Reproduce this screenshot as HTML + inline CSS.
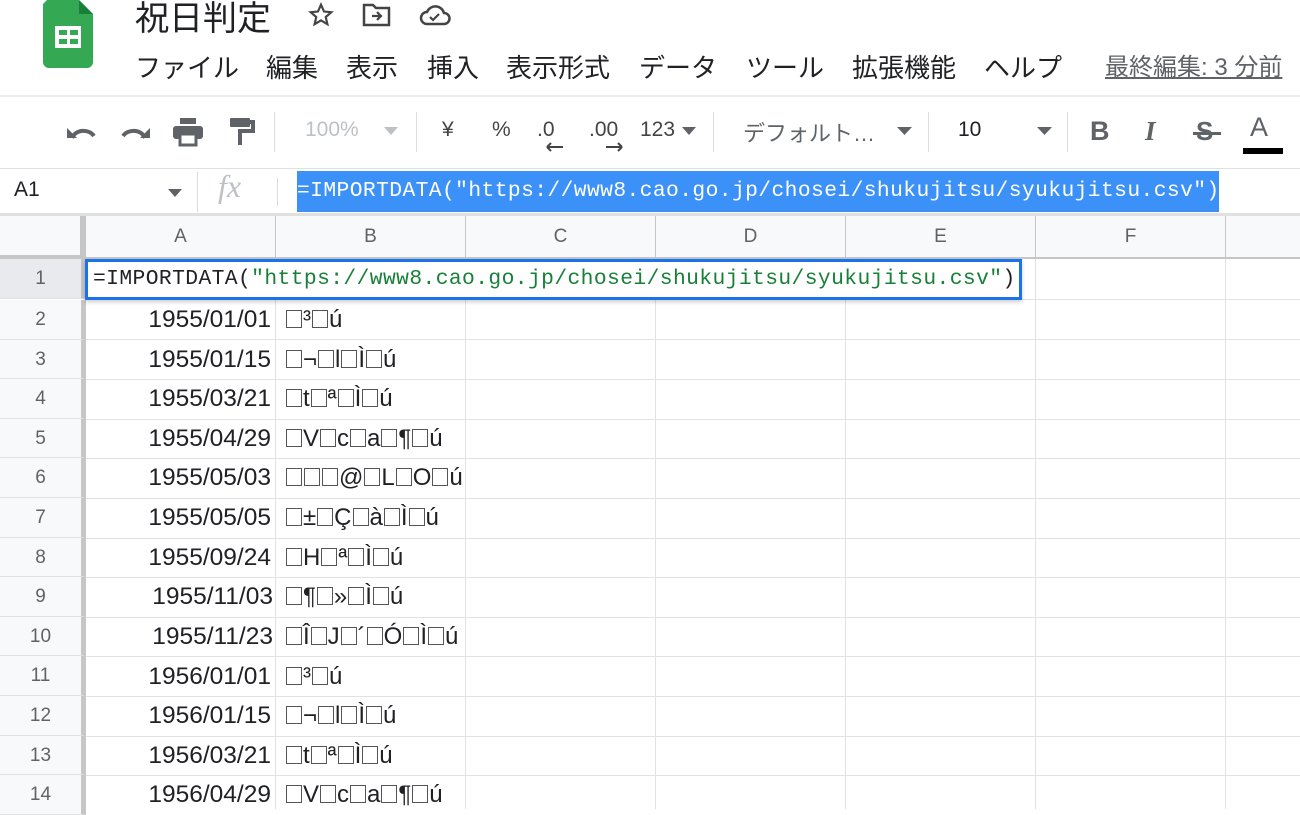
<!DOCTYPE html>
<html><head><meta charset="utf-8">
<style>
*{margin:0;padding:0;box-sizing:border-box}
body{width:1300px;height:809px;overflow:hidden;background:#fff;font-family:"Liberation Sans","Noto Sans CJK JP",sans-serif;position:relative;color:#202124}
.a{position:absolute;white-space:nowrap}
.menu{top:48px;font-size:26px;color:#202124}
.sep{position:absolute;width:1px;background:#dadce0}
.tb{top:118px;font-size:21px;color:#5f6368}
.mono{font-family:"Liberation Mono","DejaVu Sans Mono",monospace}
.col{position:absolute;top:216px;height:43px;border-right:1px solid #c6c6c6;background:#f8f9fa;border-bottom:2px solid #c6c6c6;text-align:center;font-size:19px;color:#5f6368;line-height:42px}
.rh{position:absolute;left:0;width:86px;background:#f8f9fa;border-right:5px solid #c6c6c6;border-bottom:1px solid #e2e2e2;text-align:center;font-size:19px;color:#5f6368;height:39.6px;line-height:40px}
.hl{position:absolute;left:86px;right:0;height:1px;background:#e2e2e2}
.vl{position:absolute;top:259px;bottom:0;width:1px;background:#e2e2e2}
.d{position:absolute;left:60px;width:211px;text-align:right;font-size:24.5px;color:#202124}
.t{position:absolute;left:285px;font-size:24px;color:#202124}
.b{display:inline-block;width:16px;height:18px;border:1px solid #555;vertical-align:-1px;margin:0 1px}
</style></head><body>
<svg class="a" style="left:42px;top:0" width="52" height="70" viewBox="0 0 52 70">
<path d="M5 0H37L51 14V62a6 6 0 0 1-6 6H7a6 6 0 0 1-6-6V4z" fill="#34a853"/>
<path d="M37 0L51 14H37z" fill="#188038"/>
<rect x="13" y="26" width="26" height="22" fill="#fff"/>
<rect x="17" y="30" width="8" height="5" fill="#34a853"/><rect x="28" y="30" width="8" height="5" fill="#34a853"/>
<rect x="17" y="39" width="8" height="5" fill="#34a853"/><rect x="28" y="39" width="8" height="5" fill="#34a853"/>
</svg>
<div class="a" style="left:135px;top:-9px;font-size:34px;color:#202124">祝日判定</div>
<svg class="a" style="left:307px;top:2px" width="28" height="26" viewBox="0 0 24 24"><path d="M12 2.5l2.8 6.3 6.7.6-5.1 4.5 1.5 6.6L12 17l-5.9 3.5 1.5-6.6-5.1-4.5 6.7-.6z" fill="none" stroke="#444" stroke-width="2"/></svg>
<svg class="a" style="left:362px;top:3px" width="30" height="24" viewBox="0 0 30 24"><path d="M2 2h9l3 3h13v17H2z" fill="none" stroke="#444" stroke-width="2.5"/><path d="M10 13h9M15 9l4 4-4 4" fill="none" stroke="#444" stroke-width="2.2"/></svg>
<svg class="a" style="left:418px;top:3px" width="34" height="24" viewBox="0 0 34 24"><path d="M9 21a6 6 0 0 1 0-12 9 9 0 0 1 17 1 5.5 5.5 0 0 1 0 11z" fill="none" stroke="#444" stroke-width="2.5"/><path d="M12 14l3 3 6-6" fill="none" stroke="#444" stroke-width="2.2"/></svg>
<div class="a menu" style="left:135px">ファイル</div>
<div class="a menu" style="left:266px">編集</div>
<div class="a menu" style="left:346px">表示</div>
<div class="a menu" style="left:427px">挿入</div>
<div class="a menu" style="left:506px">表示形式</div>
<div class="a menu" style="left:639px">データ</div>
<div class="a menu" style="left:746px">ツール</div>
<div class="a menu" style="left:852px">拡張機能</div>
<div class="a menu" style="left:984px">ヘルプ</div>
<div class="a" style="left:1105px;top:47px;font-size:24px;color:#5f6368;text-decoration:underline">最終編集: 3 分前</div>
<div class="a" style="left:0;top:95px;width:1300px;height:2px;background:#e8eaed"></div>
<svg class="a" style="left:66px;top:121px" width="32" height="22" viewBox="0 0 32 22"><path d="M6 17a12 10 0 0 1 22 -2" fill="none" stroke="#5f6368" stroke-width="4"/><path d="M1 7v10h10z" fill="#5f6368"/></svg>
<svg class="a" style="left:119px;top:121px" width="32" height="22" viewBox="0 0 32 22"><path d="M26 17a12 10 0 0 0 -22 -2" fill="none" stroke="#5f6368" stroke-width="4"/><path d="M31 7v10h-10z" fill="#5f6368"/></svg>
<svg class="a" style="left:172px;top:117px" width="32" height="30" viewBox="0 0 32 30"><rect x="8" y="1" width="16" height="6" fill="#5f6368"/><rect x="1" y="9" width="30" height="13" rx="3" fill="#5f6368"/><rect x="8" y="17" width="16" height="11" fill="#fff" stroke="#5f6368" stroke-width="3"/></svg>
<svg class="a" style="left:228px;top:117px" width="28" height="30" viewBox="0 0 28 30"><rect x="2" y="1" width="20" height="9" rx="1" fill="#5f6368"/><path d="M22 5h3v9H12v14" fill="none" stroke="#5f6368" stroke-width="4"/></svg>
<div class="sep" style="left:274px;top:112px;height:40px"></div>
<div class="a tb" style="left:305px;color:#bdc1c6">100%</div>
<svg class="a" style="left:384px;top:127px" width="14" height="8"><path d="M0 0h14L7 8z" fill="#bdc1c6"/></svg>
<div class="sep" style="left:416px;top:112px;height:40px"></div>
<div class="a tb" style="left:442px;color:#444">¥</div>
<div class="a tb" style="left:492px;color:#444">%</div>
<div class="a tb" style="left:537px;color:#444">.0</div>
<svg class="a" style="left:545px;top:142px" width="20" height="10"><path d="M2 5h16M2 5l4-4M2 5l4 4" stroke="#444" stroke-width="2" fill="none"/></svg>
<div class="a tb" style="left:589px;color:#444">.00</div>
<svg class="a" style="left:604px;top:142px" width="20" height="10"><path d="M2 5h16M18 5l-4-4M18 5l-4 4" stroke="#444" stroke-width="2" fill="none"/></svg>
<div class="a tb" style="left:640px;color:#444">123</div>
<svg class="a" style="left:682px;top:127px" width="14" height="8"><path d="M0 0h14L7 8z" fill="#5f6368"/></svg>
<div class="sep" style="left:713px;top:112px;height:40px"></div>
<div class="a tb" style="left:743px;font-size:22px;top:116px">デフォルト…</div>
<svg class="a" style="left:897px;top:127px" width="15" height="8"><path d="M0 0h15L7.5 8z" fill="#5f6368"/></svg>
<div class="sep" style="left:928px;top:112px;height:40px"></div>
<div class="a tb" style="left:958px;color:#202124">10</div>
<svg class="a" style="left:1037px;top:127px" width="15" height="8"><path d="M0 0h15L7.5 8z" fill="#5f6368"/></svg>
<div class="sep" style="left:1067px;top:112px;height:40px"></div>
<div class="a" style="left:1090px;top:116px;font-size:27px;font-weight:bold;color:#5f6368">B</div>
<div class="a" style="left:1145px;top:116px;font-size:27px;font-weight:bold;font-style:italic;color:#5f6368;font-family:'Liberation Serif',serif">I</div>
<div class="a" style="left:1196px;top:116px;font-size:26px;font-weight:bold;color:#5f6368">S</div>
<div class="a" style="left:1193px;top:132px;width:28px;height:3px;background:#5f6368"></div>
<div class="a" style="left:1250px;top:112px;font-size:27px;color:#5f6368">A</div>
<div class="a" style="left:1243px;top:148px;width:40px;height:6px;background:#000"></div>
<div class="a" style="left:0;top:168px;width:1300px;height:1px;background:#e0e0e0"></div>
<div class="a" style="left:14px;top:178px;font-size:21px">A1</div>
<svg class="a" style="left:168px;top:189px" width="14" height="8"><path d="M0 0h14L7 8z" fill="#5f6368"/></svg>
<div class="sep" style="left:197px;top:172px;height:40px"></div>
<div class="a" style="left:218px;top:168px;font-size:32px;font-style:italic;color:#bdc1c6;font-family:'Liberation Serif',serif">fx</div>
<div class="sep" style="left:277px;top:178px;height:28px"></div>
<div class="a mono" style="left:297px;top:171px;width:922px;height:41px;background:#3c91f8;color:#fff;font-size:21.3px;line-height:41px;letter-spacing:0.4px">=IMPORTDATA("https://www8.cao.go.jp/chosei/shukujitsu/syukujitsu.csv")</div>
<div class="a" style="left:0;top:213px;width:1300px;height:3px;background:#e0e0e0"></div>
<div class="a" style="left:0;top:216px;width:86px;height:43px;background:#f8f9fa;border-right:6px solid #c6c6c6;border-bottom:4px solid #c6c6c6"></div>
<div class="col" style="left:86px;width:190px">A</div>
<div class="col" style="left:276px;width:190px">B</div>
<div class="col" style="left:466px;width:190px">C</div>
<div class="col" style="left:656px;width:190px">D</div>
<div class="col" style="left:846px;width:190px">E</div>
<div class="col" style="left:1036px;width:190px">F</div>
<div class="col" style="left:1226px;width:80px"></div>
<div class="vl" style="left:275px"></div><div class="vl" style="left:465px"></div><div class="vl" style="left:655px"></div><div class="vl" style="left:845px"></div><div class="vl" style="left:1035px"></div><div class="vl" style="left:1225px"></div>
<div class="rh" style="top:259px;height:40px;background:#e8eaed">1</div>
<div class="hl" style="top:299px"></div>
<div class="rh" style="top:300px">2</div><div class="hl" style="top:339px"></div>
<div class="rh" style="top:339.6px">3</div><div class="hl" style="top:379px"></div>
<div class="rh" style="top:379.2px">4</div><div class="hl" style="top:418.8px"></div>
<div class="rh" style="top:418.8px">5</div><div class="hl" style="top:458.4px"></div>
<div class="rh" style="top:458.4px">6</div><div class="hl" style="top:498px"></div>
<div class="rh" style="top:498px">7</div><div class="hl" style="top:537.6px"></div>
<div class="rh" style="top:537.6px">8</div><div class="hl" style="top:577.2px"></div>
<div class="rh" style="top:577.2px">9</div><div class="hl" style="top:616.8px"></div>
<div class="rh" style="top:616.8px">10</div><div class="hl" style="top:656.4px"></div>
<div class="rh" style="top:656.4px">11</div><div class="hl" style="top:696px"></div>
<div class="rh" style="top:696px">12</div><div class="hl" style="top:735.6px"></div>
<div class="rh" style="top:735.6px">13</div><div class="hl" style="top:775.2px"></div>
<div class="rh" style="top:775.2px">14</div>

<div class="d" style="top:306px">1955/01/01</div><div class="t" style="top:306px"><span class="b"></span>³<span class="b"></span>ú</div>
<div class="d" style="top:346px">1955/01/15</div><div class="t" style="top:346px"><span class="b"></span>¬<span class="b"></span>l<span class="b"></span>Ì<span class="b"></span>ú</div>
<div class="d" style="top:385px">1955/03/21</div><div class="t" style="top:385px"><span class="b"></span>t<span class="b"></span>ª<span class="b"></span>Ì<span class="b"></span>ú</div>
<div class="d" style="top:425px">1955/04/29</div><div class="t" style="top:425px"><span class="b"></span>V<span class="b"></span>c<span class="b"></span>a<span class="b"></span>¶<span class="b"></span>ú</div>
<div class="d" style="top:464px">1955/05/03</div><div class="t" style="top:464px"><span class="b"></span><span class="b"></span><span class="b"></span>@<span class="b"></span>L<span class="b"></span>O<span class="b"></span>ú</div>
<div class="d" style="top:504px">1955/05/05</div><div class="t" style="top:504px"><span class="b"></span>±<span class="b"></span>Ç<span class="b"></span>à<span class="b"></span>Ì<span class="b"></span>ú</div>
<div class="d" style="top:544px">1955/09/24</div><div class="t" style="top:544px"><span class="b"></span>H<span class="b"></span>ª<span class="b"></span>Ì<span class="b"></span>ú</div>
<div class="d" style="top:583px;left:62px">1955/11/03</div><div class="t" style="top:583px"><span class="b"></span>¶<span class="b"></span>»<span class="b"></span>Ì<span class="b"></span>ú</div>
<div class="d" style="top:623px;left:62px">1955/11/23</div><div class="t" style="top:623px"><span class="b"></span>Î<span class="b"></span>J<span class="b"></span>´<span class="b"></span>Ó<span class="b"></span>Ì<span class="b"></span>ú</div>
<div class="d" style="top:663px">1956/01/01</div><div class="t" style="top:663px"><span class="b"></span>³<span class="b"></span>ú</div>
<div class="d" style="top:702px">1956/01/15</div><div class="t" style="top:702px"><span class="b"></span>¬<span class="b"></span>l<span class="b"></span>Ì<span class="b"></span>ú</div>
<div class="d" style="top:742px">1956/03/21</div><div class="t" style="top:742px"><span class="b"></span>t<span class="b"></span>ª<span class="b"></span>Ì<span class="b"></span>ú</div>
<div class="d" style="top:781px">1956/04/29</div><div class="t" style="top:781px"><span class="b"></span>V<span class="b"></span>c<span class="b"></span>a<span class="b"></span>¶<span class="b"></span>ú</div>

<div class="a mono" style="left:85px;top:259px;width:937px;height:41px;border:3px solid #1a73e8;background:#fff;font-size:21.3px;line-height:35px;padding-left:5px;color:#202124;letter-spacing:0.4px;box-shadow:0 2px 4px rgba(0,0,0,.2)">=IMPORTDATA(<span style="color:#188038">"https://www8.cao.go.jp/chosei/shukujitsu/syukujitsu.csv"</span>)</div>
</body></html>
